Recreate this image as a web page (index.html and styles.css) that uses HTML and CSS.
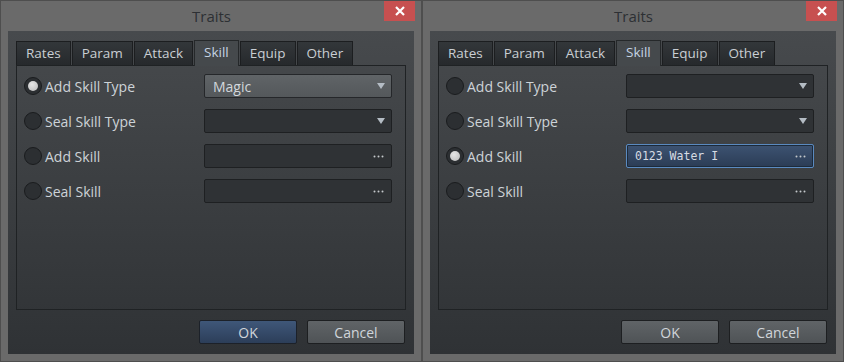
FILE: index.html
```html
<!DOCTYPE html>
<html lang="en">
<head>
  <meta charset="UTF-8" />
  <meta name="viewport" content="width=device-width, initial-scale=1.0"/>
  <title>Traits</title>
  <link rel="stylesheet" href="styles.css">
</head>
<body>
  <div class="desktop">

    <!-- Dialog: Add Skill Type selected -->
    <div class="window">
      <div class="titlebar">
        <span></span>
        <span class="title">Traits</span>
        <button class="close">
          <svg width="10" height="10" viewBox="0 0 10 10"><path d="M1 1 L9 9 M9 1 L1 9" stroke="#fff" stroke-width="2.2"/></svg>
        </button>
      </div>
      <div class="client">
        <div class="tabs">
          <div class="tab">Rates</div>
          <div class="tab">Param</div>
          <div class="tab">Attack</div>
          <div class="tab active">Skill</div>
          <div class="tab">Equip</div>
          <div class="tab">Other</div>
        </div>
        <div class="panel">
          <div class="row">
            <span class="radio checked"></span>
            <span class="label">Add Skill Type</span>
            <div class="field combo filled">
              <span>Magic</span>
              <svg class="arrow" width="8" height="6" viewBox="0 0 8 6"><path d="M0 0 H8 L4 6 Z"/></svg>
            </div>
          </div>
          <div class="row">
            <span class="radio"></span>
            <span class="label">Seal Skill Type</span>
            <div class="field combo">
              <span></span>
              <svg class="arrow" width="8" height="6" viewBox="0 0 8 6"><path d="M0 0 H8 L4 6 Z"/></svg>
            </div>
          </div>
          <div class="row">
            <span class="radio"></span>
            <span class="label">Add Skill</span>
            <div class="field">
              <span></span>
              <svg class="dots" width="11" height="3" viewBox="0 0 11 3"><circle cx="1.5" cy="1.5" r="1"/><circle cx="5.5" cy="1.5" r="1"/><circle cx="9.5" cy="1.5" r="1"/></svg>
            </div>
          </div>
          <div class="row">
            <span class="radio"></span>
            <span class="label">Seal Skill</span>
            <div class="field">
              <span></span>
              <svg class="dots" width="11" height="3" viewBox="0 0 11 3"><circle cx="1.5" cy="1.5" r="1"/><circle cx="5.5" cy="1.5" r="1"/><circle cx="9.5" cy="1.5" r="1"/></svg>
            </div>
          </div>
        </div>
        <div class="footer">
          <button class="btn primary">OK</button>
          <button class="btn">Cancel</button>
        </div>
      </div>
    </div>

    <!-- Dialog: Add Skill selected -->
    <div class="window">
      <div class="titlebar">
        <span></span>
        <span class="title">Traits</span>
        <button class="close">
          <svg width="10" height="10" viewBox="0 0 10 10"><path d="M1 1 L9 9 M9 1 L1 9" stroke="#fff" stroke-width="2.2"/></svg>
        </button>
      </div>
      <div class="client">
        <div class="tabs">
          <div class="tab">Rates</div>
          <div class="tab">Param</div>
          <div class="tab">Attack</div>
          <div class="tab active">Skill</div>
          <div class="tab">Equip</div>
          <div class="tab">Other</div>
        </div>
        <div class="panel">
          <div class="row">
            <span class="radio"></span>
            <span class="label">Add Skill Type</span>
            <div class="field combo">
              <span></span>
              <svg class="arrow" width="8" height="6" viewBox="0 0 8 6"><path d="M0 0 H8 L4 6 Z"/></svg>
            </div>
          </div>
          <div class="row">
            <span class="radio"></span>
            <span class="label">Seal Skill Type</span>
            <div class="field combo">
              <span></span>
              <svg class="arrow" width="8" height="6" viewBox="0 0 8 6"><path d="M0 0 H8 L4 6 Z"/></svg>
            </div>
          </div>
          <div class="row">
            <span class="radio checked"></span>
            <span class="label">Add Skill</span>
            <div class="field focused">
              <span class="mono">0123 Water I</span>
              <svg class="dots" width="11" height="3" viewBox="0 0 11 3"><circle cx="1.5" cy="1.5" r="1"/><circle cx="5.5" cy="1.5" r="1"/><circle cx="9.5" cy="1.5" r="1"/></svg>
            </div>
          </div>
          <div class="row">
            <span class="radio"></span>
            <span class="label">Seal Skill</span>
            <div class="field">
              <span></span>
              <svg class="dots" width="11" height="3" viewBox="0 0 11 3"><circle cx="1.5" cy="1.5" r="1"/><circle cx="5.5" cy="1.5" r="1"/><circle cx="9.5" cy="1.5" r="1"/></svg>
            </div>
          </div>
        </div>
        <div class="footer">
          <button class="btn">OK</button>
          <button class="btn">Cancel</button>
        </div>
      </div>
    </div>

  </div>
</body>
</html>
```

FILE: styles.css
```css
* {
  box-sizing: border-box;
}

body {
  margin: 0;
  font-family: 'Open Sans', 'Noto Sans', sans-serif;
  font-size: 14px;
  background: #6b6b6b;
}

.desktop {
  display: flex;
}

.window {
  width: 422px;
  height: 362px;
  background: #6a6a6a;
  border: 1px solid #4e4e4e;
  padding: 0 7px 7px;
  display: flex;
  flex-direction: column;
}

/* Title bar */
.titlebar {
  height: 30px;
  display: grid;
  grid-template-columns: 1fr auto 1fr;
  align-items: start;
  margin: 0 -1px 0 0;
}

.title {
  font-size: 15px;
  color: #2d3034;
  line-height: 30px;
}

.close {
  justify-self: end;
  width: 31px;
  height: 20px;
  border: none;
  padding: 0;
  background: #c75050;
  display: flex;
  align-items: center;
  justify-content: center;
}

/* Client area */
.client {
  flex: 1;
  background: linear-gradient(to bottom, #474a4d, #2f3235);
  padding: 9px 8px 10px;
  display: flex;
  flex-direction: column;
}

.tabs {
  display: flex;
  height: 25px;
  align-items: flex-end;
}

.tab {
  height: 24px;
  padding: 0 9px;
  border: 1px solid #1c1e20;
  border-bottom: none;
  margin-right: 1px;
  background: linear-gradient(to bottom, #33373a, #26292c);
  color: #c9ced3;
  font-size: 13.5px;
  line-height: 22px;
}

.tab.active {
  height: 26px;
  margin-bottom: -1px;
  background: #45494c;
  color: #c4d3e3;
  position: relative;
  z-index: 1;
  border-color: #25282a;
}

.panel {
  height: 245px;
  border: 1px solid #1f2224;
  padding: 8px 13px 0 7px;
  display: flex;
  flex-direction: column;
  gap: 11px;
}

.row {
  height: 24px;
  display: flex;
  align-items: center;
}

.radio {
  width: 18px;
  height: 18px;
  border-radius: 50%;
  background: #2c2f32;
  border: 1px solid #1a1c1e;
  display: flex;
  align-items: center;
  justify-content: center;
  margin-right: 3px;
}

.radio.checked::after {
  content: "";
  width: 10px;
  height: 10px;
  border-radius: 50%;
  background: radial-gradient(circle at 40% 35%, #e6e6e6, #b9b9b9);
}

.label {
  flex: 1;
  color: #cdd3d8;
}

.field {
  width: 188px;
  height: 24px;
  border: 1px solid #1e2022;
  border-radius: 2px;
  background: #2f3235;
  display: flex;
  align-items: center;
  justify-content: space-between;
  padding: 0 6px 0 8px;
  color: #d2d7dc;
}

.field.filled {
  background: linear-gradient(to bottom, #606467, #54585b);
  border-color: #25272a;
}

.field.focused {
  border: 1px solid #5a8ac0;
  box-shadow: inset 0 0 0 1px #1d2a3a;
  background: linear-gradient(to bottom, #3d5372, #2b3c55);
}

.mono {
  font-family: 'DejaVu Sans Mono', monospace;
  font-size: 11.5px;
  color: #d6dce3;
}

.arrow {
  fill: #b4bcc4;
}

.dots {
  fill: #c4c8cc;
  margin-right: 1px;
}

/* Buttons */
.footer {
  display: flex;
  justify-content: flex-end;
  gap: 10px;
  margin-top: 10px;
  padding-right: 1px;
}

.btn {
  width: 98px;
  height: 24px;
  font-family: inherit;
  font-size: 14px;
  color: #d0d5da;
  border: 1px solid #1d1f21;
  border-radius: 2px;
  background: linear-gradient(to bottom, #606467, #4f5356);
}

.btn.primary {
  background: linear-gradient(to bottom, #3f5779, #2c3e59);
  border-color: #1c2129;
}
```
